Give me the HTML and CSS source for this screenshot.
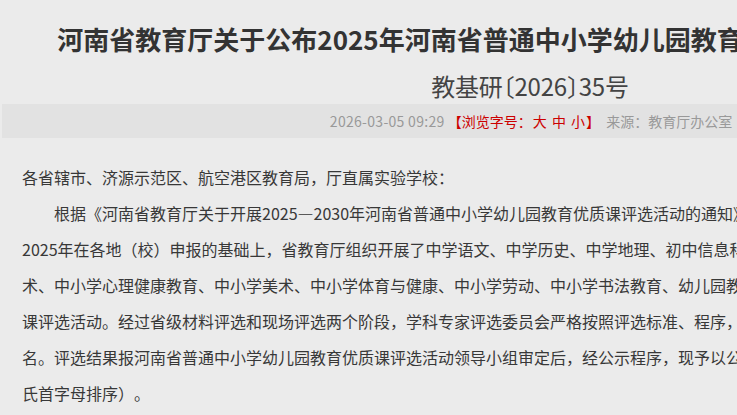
FILE: index.html
```html
<!DOCTYPE html>
<html lang="zh-CN">

<head>
    <meta charset="UTF-8">
    <meta name="viewport" content="width=device-width, initial-scale=1.0">
    <title>河南省教育厅关于公布2025年河南省普通中小学幼儿园教育优质课评选结果的通知</title>
    <link rel="stylesheet" href="styles.css">
</head>

<body>
    <div class="page">
        <div class="article-head">
            <h1 class="article-title">河南省教育厅关于公布2025年河南省普通中小学幼儿园教育优质课评选结果的通知</h1>
            <p class="doc-number">教基研〔2026〕35号</p>
            <div class="article-meta">
                <span class="meta-date">2026-03-05 09:29</span>
                <span class="font-switch">【浏览字号：<a href="#">大</a> <a href="#">中</a> <a href="#">小</a>】</span>
                <span class="meta-source">来源：教育厅办公室</span>
            </div>
        </div>

        <div class="article-body">
            <p>各省辖市、济源示范区、航空港区教育局，厅直属实验学校：</p>
            <p class="indent">根据《河南省教育厅关于开展2025—2030年河南省普通中小学幼儿园教育优质课评选活动的通知》要求，为进一步深化基础教育课堂改革，2025年在各地（校）申报的基础上，省教育厅组织开展了中学语文、中学历史、中学地理、初中信息科技、小学语文、小学数学、小学英语、艺术、中小学心理健康教育、中小学美术、中小学体育与健康、中小学劳动、中小学书法教育、幼儿园教育等共二十一个学科（领域）的教育优质课评选活动。经过省级材料评选和现场评选两个阶段，学科专家评选委员会严格按照评选标准、程序，公平公正评审，评出一等奖、二等奖若干名。评选结果报河南省普通中小学幼儿园教育优质课评选活动领导小组审定后，经公示程序，现予以公布。获奖名单详见附件（同一等次内按姓氏首字母排序）。</p>
        </div>
    </div>
</body>

</html>
```

FILE: styles.css
```css
/* ---- Base ---- */

html,
body {
    margin: 0;
    overflow: hidden;
}

body {
    background-color: #ebebeb;
    color: #333;
    font-family: "Noto Sans CJK SC", "Microsoft YaHei", sans-serif;
    text-spacing-trim: space-all;
}

.page {
    width: 1060px;
}

/* ---- Article head ---- */

.article-head {
    text-align: center;
}

.article-title {
    margin: 0;
    padding-top: 18px;
    font-size: 26px;
    line-height: 42px;
    font-weight: bold;
    color: #333;
}

.doc-number {
    margin: 8px 0 0;
    font-size: 24px;
    line-height: 36px;
    color: #444;
    font-feature-settings: "halt";
}

.doc-number,
.meta-date {
    letter-spacing: -0.2px;
}

.article-meta {
    margin: 0 0 0 2px;
    height: 34px;
    line-height: 34px;
    font-size: 14px;
    color: #999;
    background-color: #e2e2e2;
}

.meta-date {
    letter-spacing: 0.3px;
}

.font-switch {
    color: #c00;
}

.font-switch a {
    margin: 0 1px;
    color: #c00;
    text-decoration: none;
}

.meta-source {
    margin-left: 3px;
}

/* ---- Article body ---- */

.article-body {
    width: 1022px;
    margin-top: 21px;
    padding-left: 22px;
    font-size: 16px;
    line-height: 36px;
    color: #383838;
}

.article-body p {
    margin: 0;
}

.article-body .indent {
    text-indent: 2em;
}
```
